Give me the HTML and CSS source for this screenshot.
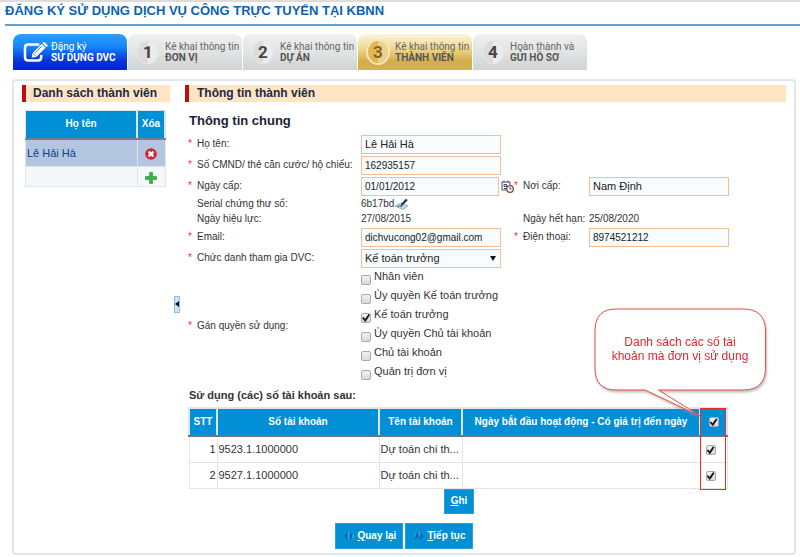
FILE: index.html
```html
<!DOCTYPE html>
<html lang="vi">
<head>
<meta charset="utf-8">
<title>Đăng ký sử dụng dịch vụ công trực tuyến tại KBNN</title>
<link rel="stylesheet" href="styles.css">
</head>
<body>
<header class="page-head"><h1>ĐĂNG KÝ SỬ DỤNG DỊCH VỤ CÔNG TRỰC TUYẾN TẠI KBNN</h1></header>
<nav class="steps">
  <a class="step step-start" href="#">
    <svg class="step-pen" viewBox="0 0 26 22" aria-hidden="true"><path d="M17 2.500H5.500Q2 2.500 2 6v10q0 3.500 3.500 3.500h10q3.500 0 3.500-3.500v-2.500" fill="none" stroke="#fff" stroke-width="2.600"/><path d="M9 16.500l1-5L19.500 2l4 4-9.500 9.500z" fill="#fff"/><path d="M20.300 1.200l1-.9q.8-.6 1.600.2l2.400 2.400q.7.800 0 1.600l-1 .9z" fill="#fff"/><path d="M10.700 12.300l2.500 2.500M12.500 11.500l7-7" stroke="#1463e8" stroke-width=".8"/></svg>
    <span>Đăng ký<b>SỬ DỤNG DVC</b></span>
  </a>
  <a class="step" href="#"><i>1</i><span>Kê khai thông tin<b>ĐƠN VỊ</b></span></a>
  <a class="step" href="#"><i>2</i><span>Kê khai thông tin<b>DỰ ÁN</b></span></a>
  <a class="step step-current" href="#"><i>3</i><span>Kê khai thông tin<b>THÀNH VIÊN</b></span></a>
  <a class="step" href="#"><i>4</i><span>Hoàn thành và<b>GỬI HỒ SƠ</b></span></a>
</nav>
<main class="panel">
  <div class="columns">
    <section class="members">
      <h2 class="bar">Danh sách thành viên</h2>
      <table class="member-table">
        <thead><tr><th>Họ tên</th><th class="col-del">Xóa</th></tr></thead>
        <tbody>
          <tr class="selected"><td>Lê Hải Hà</td><td class="mid"><button class="icon-btn" type="button" aria-label="Xóa"><svg width="12" height="12" viewBox="0 0 12 12"><circle cx="6" cy="6" r="5.800" fill="#d8202c"/><path d="M3.600 3.600l4.800 4.800M8.400 3.600l-4.800 4.800" stroke="#fff" stroke-width="2.400"/></svg></button></td></tr>
          <tr class="add"><td></td><td class="mid"><button class="icon-btn" type="button" aria-label="Thêm"><svg width="12" height="12" viewBox="0 0 12 12"><path d="M4.500 .5h3v4h4v3h-4v4h-3v-4h-4v-3h4z" fill="#35b14a" stroke="#249038" stroke-width=".6"/></svg></button></td></tr>
        </tbody>
      </table>
    </section>
    <div class="splitter"><button type="button" aria-label="Thu gọn"></button></div>
    <section class="details">
      <h2 class="bar">Thông tin thành viên</h2>
      <form class="form">
        <h3>Thông tin chung</h3>
        <div class="row"><label class="req" for="name">Họ tên:</label><input class="field field-name" id="name" type="text" value="Lê Hải Hà"></div>
        <div class="row"><label class="req" for="idno">Số CMND/ thẻ căn cước/ hộ chiếu:</label><input class="field" id="idno" type="text" value="162935157"></div>
        <div class="row">
          <label class="req" for="issued">Ngày cấp:</label>
          <div class="date"><input class="field" id="issued" type="text" value="01/01/2012"><button class="icon-btn" type="button" aria-label="Chọn ngày"><svg width="13" height="13" viewBox="0 0 13 13"><path d="M1 2h8v8H1z" fill="#fff" stroke="#3b4a73"/><path d="M3 .5v2M7 .5v2M3 4.500h2.500v2H3zM3 8.500h3" fill="none" stroke="#3b4a73"/><circle cx="9" cy="9" r="3.300" fill="#fff" stroke="#8f4430" stroke-width="1.300"/><path d="M9 7v2h1.700" fill="none" stroke="#333" stroke-width=".8"/></svg></button></div>
          <label class="req" for="place">Nơi cấp:</label><input class="field field-name" id="place" type="text" value="Nam Định">
        </div>
        <div class="row row-text"><span class="label">Serial chứng thư số:</span><span class="sign">6b17bd<svg width="15" height="12" viewBox="0 0 15 12" aria-hidden="true"><path d="M1 8l6-3 7 3-5 3.500z" fill="#b9dce8" stroke="#7295a8" stroke-width=".6"/><path d="M3 9q3-3 5 0" fill="none" stroke="#345" stroke-width=".8"/><path d="M6.500 8.500l1-3L12 .800l1.600 1.500L9 7z" fill="#2c2b2f"/><path d="M12.500 1l1 .9" stroke="#b76d42"/></svg></span></div>
        <div class="row row-text"><span class="label">Ngày hiệu lực:</span><span>27/08/2015</span><span class="label">Ngày hết hạn:</span><span>25/08/2020</span></div>
        <div class="row"><label class="req" for="email">Email:</label><input class="field" id="email" type="text" value="dichvucong02@gmail.com"><label class="req" for="phone">Điện thoại:</label><input class="field" id="phone" type="text" value="8974521212"></div>
        <div class="row"><label class="req" for="title">Chức danh tham gia DVC:</label><div class="select"><select class="field field-name" id="title"><option>Kế toán trưởng</option></select></div></div>
        <div class="row row-roles" role="group" aria-labelledby="roles">
          <span class="label req" id="roles">Gán quyền sử dụng:</span>
          <div class="roles">
            <label><input type="checkbox">Nhân viên</label>
            <label><input type="checkbox">Ủy quyền Kế toán trưởng</label>
            <label><input type="checkbox" checked>Kế toán trưởng</label>
            <label><input type="checkbox">Ủy quyền Chủ tài khoản</label>
            <label><input type="checkbox">Chủ tài khoản</label>
            <label><input type="checkbox">Quản trị đơn vị</label>
          </div>
        </div>
        <h4>Sử dụng (các) số tài khoản sau:</h4>
        <div class="accounts">
          <table class="account-table">
            <colgroup><col class="c-no"><col class="c-acc"><col class="c-name"><col><col class="c-check"></colgroup>
            <thead><tr><th>STT</th><th>Số tài khoản</th><th>Tên tài khoản</th><th>Ngày bắt đầu hoạt động - Có giá trị đến ngày</th><th><input type="checkbox" checked aria-label="Chọn tất cả"></th></tr></thead>
            <tbody>
              <tr><td class="num">1</td><td>9523.1.1000000</td><td>Dự toán chi th...</td><td></td><td class="pick"><input type="checkbox" checked aria-label="9523.1.1000000"></td></tr>
              <tr><td class="num">2</td><td>9527.1.1000000</td><td>Dự toán chi th...</td><td></td><td class="pick"><input type="checkbox" checked aria-label="9527.1.1000000"></td></tr>
            </tbody>
          </table>
          <div class="highlight"></div>
          <div class="callout">
            <svg width="178" height="114" viewBox="0 0 178 114" aria-hidden="true"><path d="M22 1H149Q171.500 1 171.500 23V60Q171.500 82 149 82H64.500L107 108.500L51 82H22Q1 82 1 60V23Q1 1 22 1Z" fill="#fff" stroke="#ee4a44"/></svg>
            <p>Danh sách các số tài<br>khoản mà đơn vị sử dụng</p>
          </div>
        </div>
        <div class="save"><button class="btn btn-save" type="button"><span><u>G</u>hi</span></button></div>
      </form>
    </section>
  </div>
  <footer class="actions">
    <button class="btn" type="button"><svg width="10" height="8" viewBox="0 0 10 8" aria-hidden="true"><path d="M4.500 1L1.500 4l3 3M9 1L6 4l3 3" fill="none" stroke="#075aa8" stroke-width="1.300"/><path d="M4.500 .5v7M9 .5v7" stroke="#7fc0ea" stroke-width=".7"/></svg><span><u>Q</u>uay lại</span></button>
    <button class="btn" type="button"><svg width="10" height="8" viewBox="0 0 10 8" aria-hidden="true"><path d="M1 1l3 3-3 3M5.500 1l3 3-3 3" fill="none" stroke="#075aa8" stroke-width="1.300"/><path d="M1 .5v3M5.500 .5v3" stroke="#7fc0ea" stroke-width=".7"/></svg><span><u>T</u>iếp tục</span></button>
  </footer>
</main>
</body>
</html>
```
FILE: styles.css
```css
* { box-sizing: border-box; }
body { margin: 0; background: #fff; color: #333; font: 11px/14px "Liberation Sans", Arial, sans-serif; }
h1, h2, h3, h4, p { margin: 0; }
input, select, button { font: inherit; color: inherit; margin: 0; }

.page-head { border-top: 2px solid #dcdcdc; padding-left: 5px; height: 26px; position: relative; }
.page-head::after { content: ""; position: absolute; left: 5px; right: 0; bottom: 0; height: 2px; background: #5aa2dc; }
h1 { color: #0b63b0; font-size: 13px; line-height: 17px; }

.steps { display: flex; gap: 1px; padding: 8px 13px 0; }
.step { display: flex; align-items: center; width: 114px; height: 36px; padding: 0 0 0 10px; gap: 7px; border-radius: 8px 8px 0 0; background: linear-gradient(#efefef, #e2e4e4 50%, #cfd3d3); color: #666; font: 10px/11px Roboto, sans-serif; text-decoration: none; white-space: nowrap; }
.step b { display: block; font-weight: 700; color: #555; }
.step i { flex: none; width: 20px; height: 22px; border-radius: 50%; background: linear-gradient(90deg, #dcdcdc 50%, #ececec 50%); box-shadow: 0 0 0 1px #e8e8e8; color: #444; font: 700 17px/22px Roboto, sans-serif; text-align: center; }
.step-start { background: linear-gradient(#2d9dff, #1787f8 35%, #0633dc 75%, #0524d2); color: #fff; gap: 3px; }
.step-start b { color: #fff; }
.step-pen { flex: none; width: 25px; height: 21px; }
.step-current { background: linear-gradient(#fdf6dd, #efd791 40%, #d2ae4b 75%, #d4b152); }
.step-current i { background: linear-gradient(90deg, #dfb856 50%, #ecd18b 50%); box-shadow: 0 0 0 2px #f6e6b5; color: #8a6414; }

.panel { margin: 9px 4px 0 12px; padding: 4px 8px; border: 2px solid #e1e5ec; border-radius: 4px; }
.columns { display: flex; }
.members { width: 148px; }
.bar { height: 17px; border-left: 4px solid #b90e12; background: #ffe5c3; padding-left: 7px; color: #1b2a47; font-size: 12px; line-height: 16px; }
.member-table { width: 141px; margin: 8px 0 0 3px; border-collapse: collapse; table-layout: fixed; }
.member-table th, .member-table td { border: 1px solid #dfe5ec; padding: 0 1px; }
th { background: #018fd6; color: #fff; font-size: 10px; font-weight: 700; text-align: center; }
.member-table th { height: 28px; border-bottom: 2px solid #7a7f84; border-right-width: 2px; }
.col-del { width: 28px; }
.selected td { height: 28px; background: #b3c5df; color: #0f3f80; }
.add td { height: 20px; background: #f4f8fb; }
.mid { text-align: center; }
.icon-btn { border: 0; background: none; padding: 0; display: inline-flex; vertical-align: middle; }

.splitter { width: 15px; display: flex; align-items: center; padding: 0 4px; }
.splitter button { width: 6px; height: 17px; margin-top: 10px; padding: 0; border: 1px solid #8fbde3; background: #cbe4f8; display: flex; align-items: center; }
.splitter button::before { content: ""; border: 3px solid transparent; border-left: 0; border-right: 4px solid #111; }
.details { flex: 1; min-width: 0; }
.details .bar { padding-left: 8px; }
.form { padding: 11px 0 0 4px; }
h3 { color: #1b2233; font-size: 13px; line-height: 16px; margin-bottom: 5px; }
.row { display: grid; grid-template-columns: 172px 154px 74px 140px; align-items: center; height: 20px; margin-bottom: 1px; font-size: 10px; }
.row-text { height: 14px; }
.row-text > span { white-space: nowrap; }
.row label, .label { padding-left: 8px; white-space: nowrap; position: relative; }
.req::before { content: "*"; position: absolute; left: -1px; top: 0; color: #e33; }
.field { width: 140px; height: 19px; border: 1px solid #f0c094; background: #f8fcff; padding: 0 3px; outline: 0; color: #222; }
.field-name { font-size: 11px; }
.date { display: flex; align-items: center; gap: 2px; }
.date .field { width: 138px; }
.sign { display: flex; align-items: center; }
.select { position: relative; width: 140px; }
.select .field { appearance: none; display: block; }
.select::after { content: ""; position: absolute; right: 5px; top: 7px; border: 3px solid transparent; border-top: 5px solid #111; border-bottom: 0; }
.row-roles { height: auto; margin: 0; }
.row .roles label { display: flex; gap: 3px; height: 19px; padding: 0; font-size: 11px; }

input[type="checkbox"] { appearance: none; flex: none; position: relative; width: 10px; height: 10px; border: 1px solid #aaa; border-radius: 2px; background: linear-gradient(#f2f2f2, #d9d9d9); vertical-align: middle; }
input[type="checkbox"]:checked::after { content: ""; position: absolute; inset: 0; background: #151525; clip-path: polygon(0 50%, 20% 38%, 38% 62%, 82% 0, 100% 14%, 42% 100%); }
.roles input[type="checkbox"] { margin-top: 6px; }

h4 { font-size: 11px; line-height: 14px; margin: 5px 0; }
.accounts { position: relative; width: 540px; margin-left: -1px; }
.account-table { width: 100%; table-layout: fixed; border-collapse: collapse; }
.account-table th, .account-table td { border: 1px solid #e4e4e4; padding: 0 1px; height: 26px; white-space: nowrap; color: #333; }
.account-table th { height: 28px; color: #fff; border-width: 2px; border-bottom-color: #70757a; padding: 0; }
.account-table .num { text-align: right; }
.account-table .pick { padding-left: 5px; }
.c-no { width: 28px; }
.c-acc { width: 162px; }
.c-name { width: 83px; }
.c-check { width: 27px; }
.highlight { position: absolute; right: 2px; top: 1px; width: 26px; bottom: -1px; border: 1px solid #f02a2a; }
.callout { position: absolute; right: -44px; top: -99px; width: 178px; filter: drop-shadow(1px 2px 1px #9999); }
.callout svg { display: block; }
.callout p { position: absolute; left: 0; right: 6px; top: 27px; text-align: center; color: #f0202c; font-size: 12px; line-height: 14px; }
.save { display: flex; width: 540px; justify-content: center; }
.btn { display: flex; align-items: center; justify-content: center; gap: 3px; height: 26px; padding: 0 6px 0 8px; border: 1px solid #29a0df; background: #018fd6; color: #fff; font-size: 10px; font-weight: 700; white-space: nowrap; }
.btn-save { height: 25px; padding: 0 6px; }
.actions { display: flex; justify-content: center; gap: 2px; margin-top: 9px; }
```
